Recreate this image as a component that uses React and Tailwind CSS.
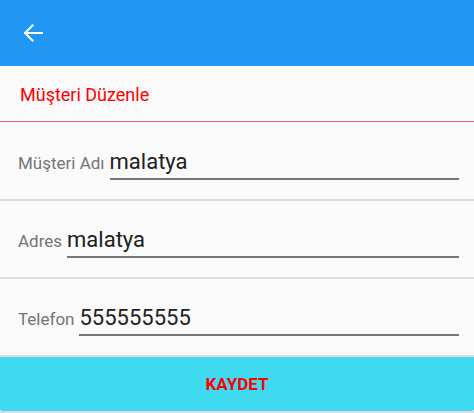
import React from "react";

function Row({ label, value, h }) {
  return (
    <div className={`flex flex-col justify-end pl-[18px] pr-[15px] pb-[19px] ${h}`}>
      <div className="flex items-baseline gap-[5px]">
        <span className="text-[17px] text-[#757575] leading-none">{label}</span>
        <div className="flex-1 border-b-2 border-[#767676] pb-[3px] text-[22px] leading-[26px] text-[#212121]">
          {value}
        </div>
      </div>
    </div>
  );
}

export default function App() {
  return (
    <div className="w-[474px] h-[413px] bg-[#fafafa] flex flex-col" style={{ fontFamily: "Roboto, 'Noto Sans', sans-serif" }}>
      <div className="h-[66px] bg-[#2196f3] flex items-center pl-[23px]">
        <svg width="20" height="18" viewBox="0 0 20 18" fill="none" stroke="white" strokeWidth="2" strokeLinecap="square">
          <path d="M2 9H19" />
          <path d="M9.5 1.5L2 9L9.5 16.5" />
        </svg>
      </div>
      <div className="h-[55px] flex items-center pl-[20px] pt-[2px] text-[18px] text-[#ff0000]">Müşteri Düzenle</div>
      <div className="h-px bg-[#ec5a8c]" />
      <Row label="Müşteri Adı" value="malatya" h="h-[77px]" />
      <div className="h-[2px] bg-[#dcdcdc]" />
      <Row label="Adres" value="malatya" h="h-[76px]" />
      <div className="h-[2px] bg-[#dcdcdc]" />
      <Row label="Telefon" value="555555555" h="h-[76px]" />
      <div className="h-[2px] bg-[#dcdcdc]" />
      <div className="h-[54px] bg-[#3fd9f0] rounded-b-[2px] flex items-center justify-center pt-[2px] text-[17px] font-bold text-[#ff0000]">
        KAYDET
      </div>
      <div className="flex-1 bg-[#dcdcdc]" />
    </div>
  );
}
